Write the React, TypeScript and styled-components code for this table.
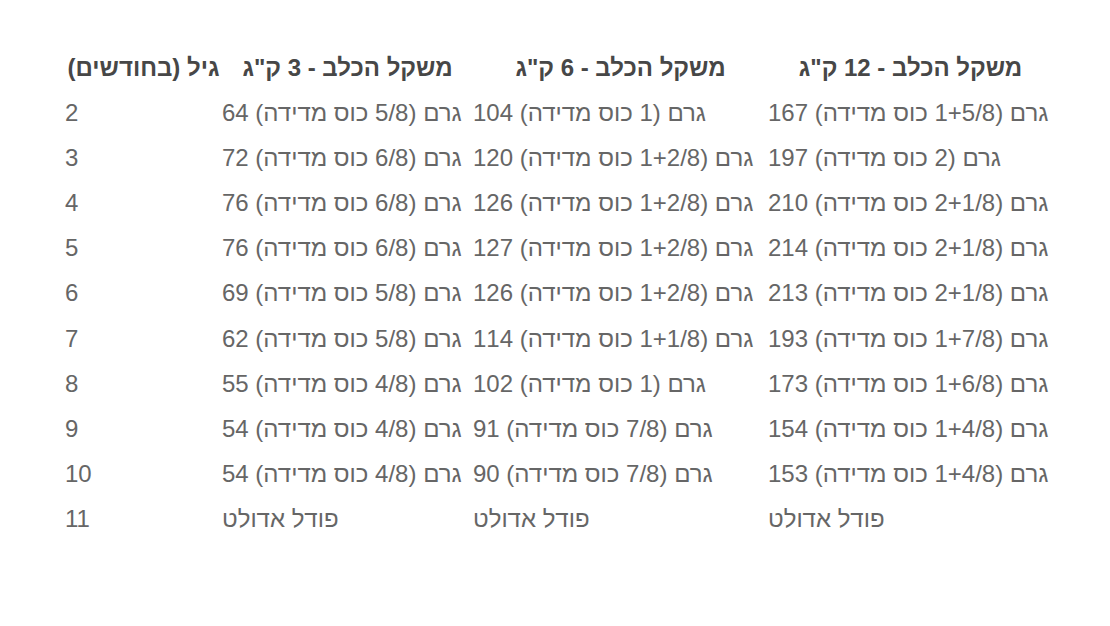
import React from 'react';
import styled, { createGlobalStyle } from 'styled-components';

const GlobalStyle = createGlobalStyle`
  html, body {
    margin: 0;
    padding: 0;
    background: #ffffff;
  }
  body {
    font-family: "Liberation Sans", "DejaVu Sans", sans-serif;
  }
`;

const Page = styled.div`
  width: 1110px;
  height: 626px;
  padding: 45px 0 0 65px;
  box-sizing: border-box;
`;

const Table = styled.table`
  border-collapse: collapse;
  table-layout: fixed;
  font-size: 24px;
  white-space: nowrap;
`;

const HeadCell = styled.th<{ $w: number }>`
  width: ${(p) => p.$w}px;
  height: 45px;
  padding: 0;
  text-align: center;
  font-weight: bold;
  color: #474747;
`;

const Cell = styled.td`
  height: 45.2px;
  padding: 0;
  text-align: left;
  color: #666666;
`;

const columns = [
  { title: 'גיל (בחודשים)', width: 157 },
  { title: 'משקל הכלב - 3 ק"ג', width: 251 },
  { title: 'משקל הכלב - 6 ק"ג', width: 295 },
  { title: 'משקל הכלב - 12 ק"ג', width: 285 },
];

const cup = (grams: number, cups: string) => `גרם (${cups} כוס מדידה) ${grams}`;
const adult = 'פודל אדולט';

const rows: string[][] = [
  ['2', cup(64, '5/8'), cup(104, '1'), cup(167, '1+5/8')],
  ['3', cup(72, '6/8'), cup(120, '1+2/8'), cup(197, '2')],
  ['4', cup(76, '6/8'), cup(126, '1+2/8'), cup(210, '2+1/8')],
  ['5', cup(76, '6/8'), cup(127, '1+2/8'), cup(214, '2+1/8')],
  ['6', cup(69, '5/8'), cup(126, '1+2/8'), cup(213, '2+1/8')],
  ['7', cup(62, '5/8'), cup(114, '1+1/8'), cup(193, '1+7/8')],
  ['8', cup(55, '4/8'), cup(102, '1'), cup(173, '1+6/8')],
  ['9', cup(54, '4/8'), cup(91, '7/8'), cup(154, '1+4/8')],
  ['10', cup(54, '4/8'), cup(90, '7/8'), cup(153, '1+4/8')],
  ['11', adult, adult, adult],
];

const App = () => {
  return (
    <>
      <GlobalStyle />
      <Page>
        <Table>
          <thead>
            <tr>
              {columns.map((c) => (
                <HeadCell key={c.title} $w={c.width} dir="rtl">
                  {c.title}
                </HeadCell>
              ))}
            </tr>
          </thead>
          <tbody>
            {rows.map((r) => (
              <tr key={r[0]}>
                {r.map((v, i) => (
                  <Cell key={i}>{v}</Cell>
                ))}
              </tr>
            ))}
          </tbody>
        </Table>
      </Page>
    </>
  );
};

export default App;
